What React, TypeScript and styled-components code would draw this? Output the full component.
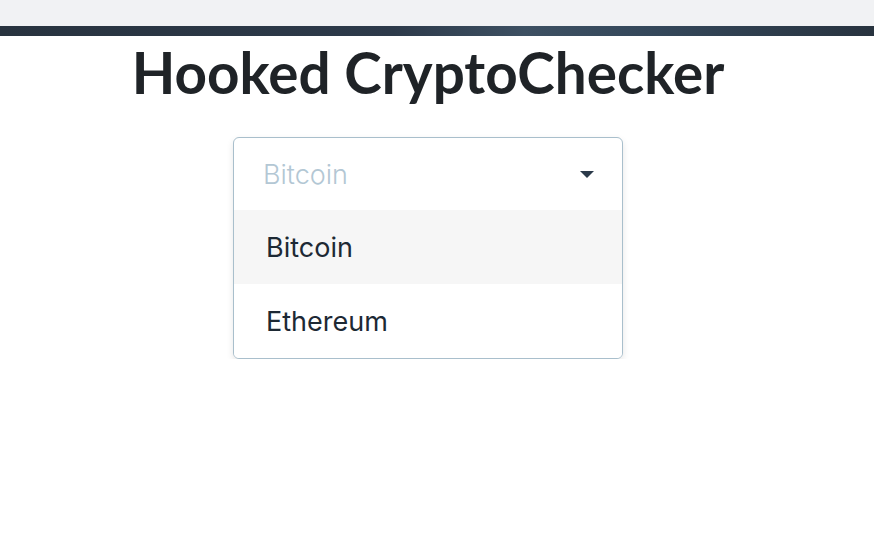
import React from "react";
import styled, { createGlobalStyle } from "styled-components";

const Global = createGlobalStyle`
  html, body { margin: 0; padding: 0; background: #ffffff; }
  body { font-family: "Inter", "Liberation Sans", sans-serif; }
`;

const TopStrip = styled.div`
  height: 26px;
  background: #f1f2f4;
`;

const DarkBand = styled.div`
  height: 10px;
  background: linear-gradient(90deg, #28333f 0%, #2d3a4a 45%, #3d5062 60%, #34475a 75%, #28333f 100%);
`;

const Main = styled.main`
  display: flex;
  flex-direction: column;
  align-items: center;
  padding-right: 18px;
`;

const Title = styled.h1`
  margin: 4px 0 0;
  font-family: "Lato", "Liberation Sans", sans-serif;
  font-weight: 700;
  font-size: 56.6px;
  line-height: 64px;
  color: #1f2327;
`;

const Select = styled.div`
  margin-top: 33px;
  width: 388px;
  border: 1px solid #a9bfcc;
  border-radius: 6px;
  background: #fff;
  box-shadow: 0 3px 7px rgba(0, 0, 0, 0.1);
  overflow: hidden;
`;

const Control = styled.div`
  height: 72px;
  display: flex;
  align-items: center;
  justify-content: space-between;
  padding: 0 28px 0 29px;
`;

const Placeholder = styled.span`
  font-size: 27px;
  font-weight: 300;
  color: #b3c7d4;
`;

const Option = styled.div<{ $active?: boolean }>`
  height: 74px;
  display: flex;
  align-items: center;
  padding: 0 32px;
  font-size: 27px;
  color: #1d2934;
  background: ${(p) => (p.$active ? "#f6f6f6" : "#fff")};
`;

export default function App() {
  return (
    <>
      <Global />
      <TopStrip />
      <DarkBand />
      <Main>
        <Title>Hooked CryptoChecker</Title>
        <Select>
          <Control>
            <Placeholder>Bitcoin</Placeholder>
            <svg width="14" height="7" viewBox="0 0 14 7">
              <path d="M0 0 H14 L7 7 Z" fill="#2b3a4a" />
            </svg>
          </Control>
          <Option $active>Bitcoin</Option>
          <Option>Ethereum</Option>
        </Select>
      </Main>
    </>
  );
}
